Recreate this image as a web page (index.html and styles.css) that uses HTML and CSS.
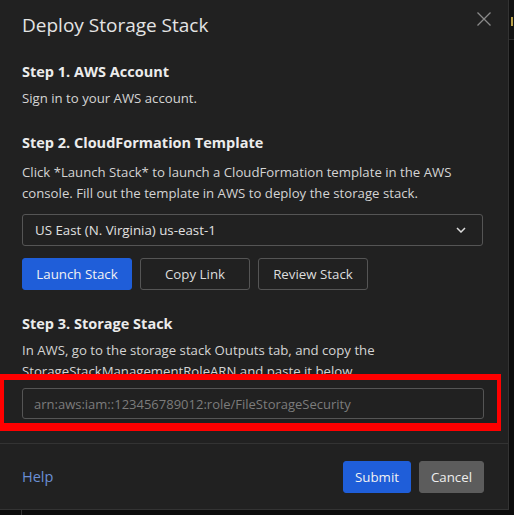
FILE: index.html
```html
<!DOCTYPE html>
<html lang="en">
<head>
<meta charset="utf-8">
<title>Deploy Storage Stack</title>
<link rel="stylesheet" href="styles.css">
</head>
<body>
<div class="screen">
  <div class="modal">
    <div class="modal-header">
      <h2 class="modal-title">Deploy Storage Stack</h2>
      <button class="close-btn" aria-label="Close">
        <svg width="14" height="14" viewBox="0 0 14 14"><path d="M0.5 0.5 L13.5 13.5 M13.5 0.5 L0.5 13.5" stroke="#8a8a8a" stroke-width="1.3" fill="none"/></svg>
      </button>
    </div>
    <div class="modal-body">
      <h3 class="step-title">Step 1. AWS Account</h3>
      <p class="step-text">Sign in to your AWS account.</p>

      <h3 class="step-title step-gap">Step 2. CloudFormation Template</h3>
      <p class="step-text step-text-wide">Click *Launch Stack* to launch a CloudFormation template in the AWS console. Fill out the template in AWS to deploy the storage stack.</p>
      <div class="select">
        <span class="select-value">US East (N. Virginia) us-east-1</span>
        <svg class="chevron" width="10" height="6" viewBox="0 0 10 6"><path d="M1 1 L5 5 L9 1" stroke="#dcdcdc" stroke-width="1.5" fill="none"/></svg>
      </div>
      <div class="btn-row">
        <button class="btn btn-primary btn-launch">Launch Stack</button>
        <button class="btn btn-outline btn-copy">Copy Link</button>
        <button class="btn btn-outline btn-review">Review Stack</button>
      </div>

      <h3 class="step-title step-gap">Step 3. Storage Stack</h3>
      <p class="step-text">In AWS, go to the storage stack Outputs tab, and copy the StorageStackManagementRoleARN and paste it below</p>
      <div class="highlight">
        <div class="text-input">arn:aws:iam::123456789012:role/FileStorageSecurity</div>
      </div>
    </div>
    <div class="modal-footer">
      <a class="help-link">Help</a>
      <div class="footer-actions">
        <button class="btn btn-primary btn-submit">Submit</button>
        <button class="btn btn-secondary btn-cancel">Cancel</button>
      </div>
    </div>
  </div>
  <div class="side-strip"><span class="side-glyph"></span></div>
</div>
<div class="below"><span class="below-line"></span></div>
</body>
</html>
```

FILE: styles.css
```css
* { box-sizing: border-box; }
html, body {
  margin: 0;
  padding: 0;
  background: #0c0c0c;
  font-family: "Open Sans", "Noto Sans", "Liberation Sans", sans-serif;
  color: #d6d6d6;
  overflow: hidden;
}
.screen {
  display: flex;
  height: 510px;
}
.modal {
  width: 509px;
  height: 510px;
  background: #212121;
  border-right: 1px solid #333333;
  border-bottom: 1px solid #333333;
  display: flex;
  flex-direction: column;
}
.modal-header {
  height: 50px;
  padding: 0 22px;
  display: flex;
  align-items: center;
  justify-content: space-between;
}
.modal-title {
  margin: 0;
  font-size: 19px;
  font-weight: 400;
  color: #e4e4e4;
  line-height: 26px;
}
.close-btn {
  background: none;
  border: 0;
  padding: 0;
  width: 14px;
  height: 14px;
  margin-right: -5px;
  align-self: flex-start;
  margin-top: 12px;
  display: flex;
}
.modal-body {
  padding: 0 25px 0 22px;
}
.step-title {
  margin: 12px 0 0;
  font-size: 14.5px;
  font-weight: 700;
  line-height: 20px;
  color: #ececec;
}
.step-gap { margin-top: 24px; }
.step-text {
  margin: 6px 0 0;
  font-size: 13.2px;
  line-height: 21px;
  color: #d4d4d4;
}
.step-text-wide { margin-top: 9px; }
.select {
  margin-top: 10px;
  height: 32px;
  border: 1px solid #555555;
  border-radius: 3px;
  display: flex;
  align-items: center;
  justify-content: space-between;
  padding: 0 16px 0 12px;
  font-size: 13.3px;
  color: #e0e0e0;
}
.btn-row {
  margin-top: 12px;
  display: flex;
  gap: 8px;
}
.btn {
  height: 32px;
  padding: 0;
  border-radius: 3px;
  font-family: inherit;
  font-size: 13.3px;
  color: #e8e8e8;
  border: 1px solid transparent;
  background: none;
  white-space: nowrap;
}
.btn-launch { width: 110px; }
.btn-copy { width: 110px; }
.btn-review { width: 110px; }
.btn-submit { width: 68px; }
.btn-cancel { width: 65px; }
.btn-primary {
  background: #1f5ed9;
  border-color: #1f5ed9;
  color: #f2f2f2;
}
.btn-outline {
  border-color: #555555;
  color: #dddddd;
}
.btn-secondary {
  background: #5c5c5c;
  border-color: #5c5c5c;
  color: #eeeeee;
}
.highlight {
  position: relative;
  margin: -8px 0 0 -22px;
  width: 501px;
  background: #212121;
  border: 4px solid #ff0000;
  border-top-width: 6px;
  border-bottom-width: 8px;
  padding: 8px 13px 4px 18px;
}
.text-input {
  height: 31px;
  border: 1px solid #555555;
  border-radius: 3px;
  display: flex;
  align-items: center;
  padding: 0 11px;
  font-size: 13px;
  color: #7c7c7c;
}
.modal-footer {
  margin-top: auto;
  border-top: 1px solid #333333;
  height: 66px;
  padding: 0 24px 0 22px;
  display: flex;
  align-items: center;
  justify-content: space-between;
}
.help-link {
  font-size: 14.5px;
  color: #6b8fd4;
}
.footer-actions {
  display: flex;
  gap: 8px;
}
.side-strip {
  flex: 1;
  background: #121212;
  border-bottom: 1px solid #2a2a2a;
  height: 40px;
}
.side-glyph {
  display: block;
  width: 2px;
  height: 9px;
  margin: 17px 0 0 2px;
  background: #b8a04a;
}
.below {
  height: 5px;
  padding-left: 21px;
}
.below-line {
  display: block;
  width: 1px;
  height: 5px;
  background: #333333;
}
```
